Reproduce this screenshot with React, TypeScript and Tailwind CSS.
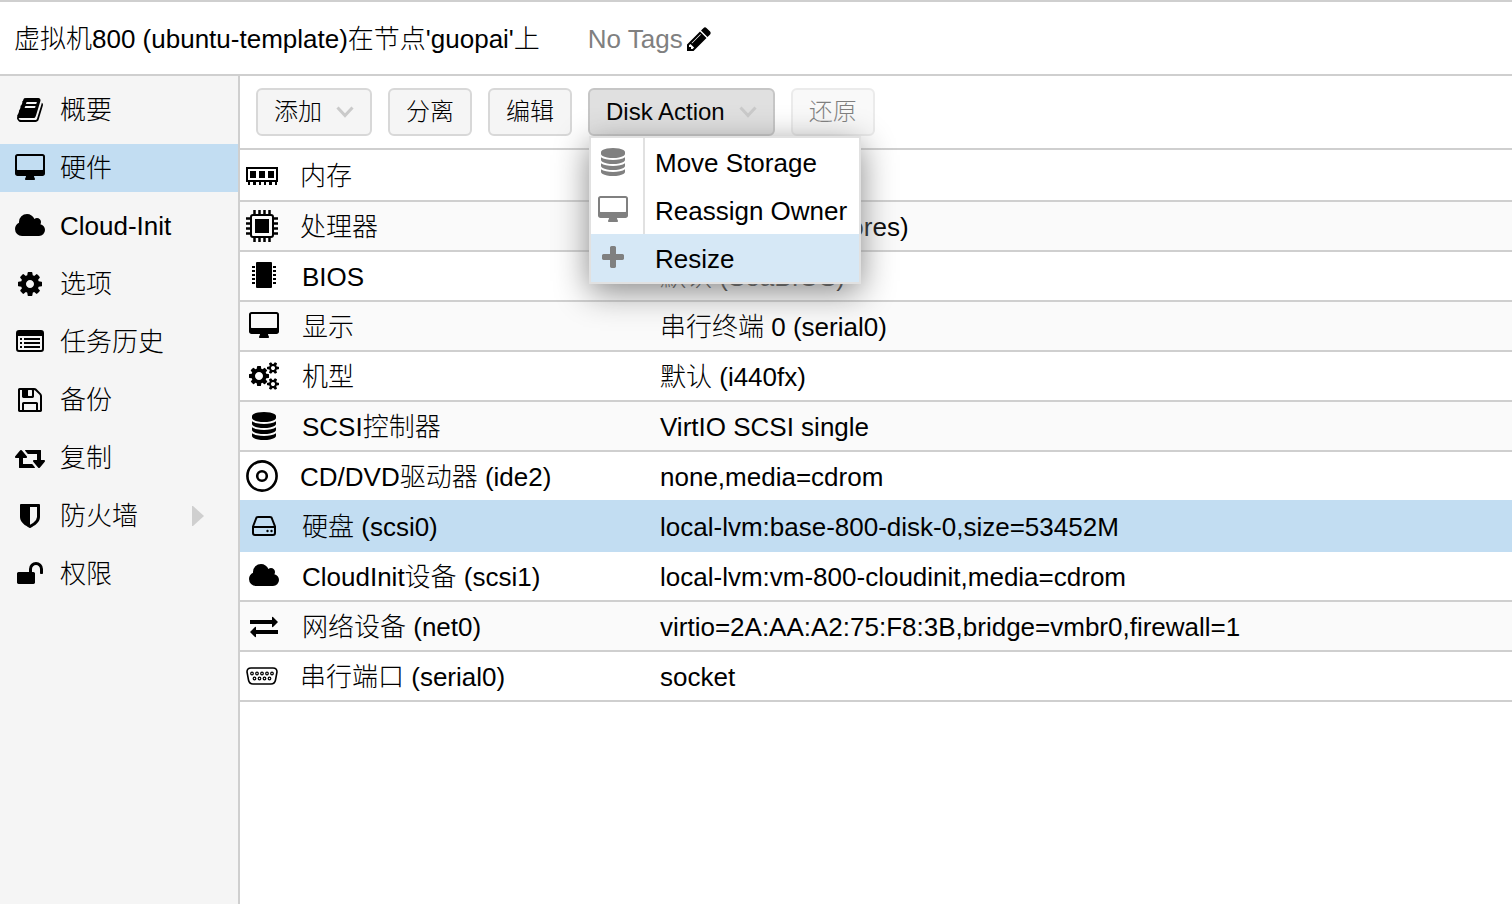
import React from 'react'

type IconProps = { className?: string }

// Solid glyphs, drawn on a grid where 1792 units are 28px
const glyphs = {
    book: 'M1703 478q40 57 18 129l-275 906q-19 64-76.5 107.5t-122.5 43.5h-923q-77 0-148.5-53.5t-99.5-131.5q-24-67-2-127 0-4 3-27t4-37q1-8-3-21.5t-3-19.5q2-11 8-21t16.5-23.5 16.5-23.5q23-38 45-91.5t30-91.5q3-10 .5-30t-.5-28q3-11 17-28t17-23q21-36 42-92t25-90q1-9-2.5-32t.5-28q4-13 22-30.5t22-22.5q19-26 42.5-84.5t27.5-96.5q1-8-3-25.5t-2-26.5q2-8 9-18t18-23 17-21q8-12 16.5-30.5t15-35 16-36 19.5-32 26.5-23.5 36-11.5 47.5 5.5l-1 3q38-9 51-9h761q74 0 114 56t18 130l-274 906q-36 119-71.5 153.5t-128.5 34.5h-869q-27 0-38 15-11 16-1 43 24 70 144 70h923q29 0 56-15.5t35-41.5l300-987q7-22 5-57 38 15 59 43zm-1064 2q-4 13 2 22.5t20 9.5h608q13 0 25.5-9.5t16.5-22.5l21-64q4-13-2-22.5t-20-9.5h-608q-13 0-25.5 9.5t-16.5 22.5zm-83 256q-4 13 2 22.5t20 9.5h608q13 0 25.5-9.5t16.5-22.5l21-64q4-13-2-22.5t-20-9.5h-608q-13 0-25.5 9.5t-16.5 22.5z',
    cog: 'M1152 896q0-106-75-181t-181-75-181 75-75 181 75 181 181 75 181-75 75-181zm512-109v222q0 12-8 23t-20 13l-185 28q-19 54-39 91 35 50 107 138 10 12 10 25t-9 23q-27 37-99 108t-94 71q-12 0-26-9l-138-108q-44 23-91 38-16 136-29 186-7 28-36 28h-222q-14 0-24.5-8.5t-11.5-21.5l-28-184q-49-16-90-37l-141 107q-10 9-25 9-14 0-25-11-126-114-165-168-7-10-7-23 0-12 8-23 15-21 51-66.5t54-70.5q-27-50-41-99l-183-27q-13-2-21-12.5t-8-23.5v-222q0-12 8-23t19-13l186-28q14-46 39-92-40-57-107-138-10-12-10-24 0-10 9-23 26-36 98.5-107.5t94.5-71.5q13 0 26 10l138 107q44-23 91-38 16-136 29-186 7-28 36-28h222q14 0 24.5 8.5t11.5 21.5l28 184q49 16 90 37l142-107q9-9 24-9 13 0 25 10 129 119 165 170 7 8 7 22 0 12-8 23-15 21-51 66.5t-54 70.5q26 50 41 98l183 28q13 2 21 12.5t8 23.5z',
    floppy: 'M512 1536h768v-384h-768v384zm896 0h128v-896q0-14-10-38.5t-20-34.5l-281-281q-10-10-34-20t-39-10v416q0 40-28 68t-68 28h-576q-40 0-68-28t-28-68v-416h-128v1280h128v-416q0-40 28-68t68-28h832q40 0 68 28t28 68v416zm-384-928v-320q0-13-9.5-22.5t-22.5-9.5h-192q-13 0-22.5 9.5t-9.5 22.5v320q0 13 9.5 22.5t22.5 9.5h192q13 0 22.5-9.5t9.5-22.5zm640 32v928q0 40-28 68t-68 28h-1344q-40 0-68-28t-28-68v-1344q0-40 28-68t68-28h928q40 0 88 20t76 48l280 280q28 28 48 76t20 88z',
    shield: 'M1344 960v-640h-448v1137q119-63 213-137 235-184 235-360zm192-768v768q0 86-33.5 170.5t-83 150-118 127.5-126.5 103-121 77.5-89.5 49.5-42.5 20q-12 6-26 6t-26-6q-16-7-42.5-20t-89.5-49.5-121-77.5-126.5-103-118-127.5-83-150-33.5-170.5v-768q0-26 19-45t45-19h1152q26 0 45 19t19 45z',
    unlock: 'M1728 576v256q0 26-19 45t-45 19h-64q-26 0-45-19t-19-45v-256q0-106-75-181t-181-75-181 75-75 181v192h96q40 0 68 28t28 68v576q0 40-28 68t-68 28h-960q-40 0-68-28t-28-68v-576q0-40 28-68t68-28h672v-192q0-185 131.5-316.5t316.5-131.5 316.5 131.5 131.5 316.5z',
    pencil: 'M491 1536l91-91-235-235-91 91v107h128v128h107zm523-928q0-22-22-22-10 0-17 7l-542 542q-7 7-7 17 0 22 22 22 10 0 17-7l542-542q7-7 7-17zm-54-192l416 416-832 832h-416v-416zm683 96q0 53-37 90l-166 166-416-416 166-165q36-38 90-38 53 0 91 38l235 234q37 39 37 91z',
    plus: 'M1600 736v192q0 40-28 68t-68 28h-416v416q0 40-28 68t-68 28h-192q-40 0-68-28t-28-68v-416h-416q-40 0-68-28t-28-68v-192q0-40 28-68t68-28h416v-416q0-40 28-68t68-28h192q40 0 68 28t28 68v416h416q40 0 68 28t28 68z',
    database: 'M896 768q237 0 443-43t325-127v170q0 69-103 128t-280 93.5-385 34.5-385-34.5-280-93.5-103-128v-170q119 84 325 127t443 43zm0 768q237 0 443-43t325-127v170q0 69-103 128t-280 93.5-385 34.5-385-34.5-280-93.5-103-128v-170q119 84 325 127t443 43zm0-384q237 0 443-43t325-127v170q0 69-103 128t-280 93.5-385 34.5-385-34.5-280-93.5-103-128v-170q119 84 325 127t443 43zm0-1152q208 0 385 34.5t280 93.5 103 128v128q0 69-103 128t-280 93.5-385 34.5-385-34.5-280-93.5-103-128v-128q0-69 103-128t280-93.5 385-34.5z',
}

const wideGlyphs = {
    desktop: 'M1792 992v-832q0-13-9.5-22.5t-22.5-9.5h-1600q-13 0-22.5 9.5t-9.5 22.5v832q0 13 9.5 22.5t22.5 9.5h1600q13 0 22.5-9.5t9.5-22.5zm128-832v1088q0 66-47 113t-113 47h-544q0 37 16 77.5t32 71 16 43.5q0 26-19 45t-45 19h-512q-26 0-45-19t-19-45q0-14 16-44t32-70 16-78h-544q-66 0-113-47t-47-113v-1088q0-66 47-113t113-47h1600q66 0 113 47t47 113z',
    cloud: 'M1920 1152q0 159-112.5 271.5t-271.5 112.5h-1088q-185 0-316.5-131.5t-131.5-316.5q0-132 71-241.5t187-163.5q-2-28-2-43 0-212 150-362t362-150q158 0 286.5 88t187.5 230q70-62 166-62 106 0 181 75t75 181q0 75-41 138 129 30 213 134.5t84 239.5z',
    retweet: 'M1280 1504q0 13-9.5 22.5t-22.5 9.5h-960q-8 0-13.5-2t-9-7-5.5-8-3-11.5-1-11.5v-600h-192q-26 0-45-19t-19-45q0-24 15-41l320-384q19-22 49-22t49 22l320 384q15 17 15 41 0 26-19 45t-45 19h-192v384h576q16 0 25 11l160 192q7 10 7 21zm640-416q0 24-15 41l-320 384q-20 23-49 23t-49-23l-320-384q-15-17-15-41 0-26 19-45t45-19h192v-384h-576q-16 0-25-12l-160-192q-7-9-7-20 0-13 9.5-22.5t22.5-9.5h960q8 0 13.5 2t9 7 5.5 8 3 11.5 1 11.5v600h192q26 0 45 19t19 45z',
    cogs: 'M896 896q0-106-75-181t-181-75-181 75-75 181 75 181 181 75 181-75 75-181zm768 512q0-52-38-90t-90-38-90 38-38 90q0 53 37.5 90.5t90.5 37.5 90.5-37.5 37.5-90.5zm0-1024q0-52-38-90t-90-38-90 38-38 90q0 53 37.5 90.5t90.5 37.5 90.5-37.5 37.5-90.5zm-384 421v185q0 10-7 19.5t-16 10.5l-155 24q-11 35-32 76 34 48 90 115 7 11 7 20 0 12-7 19-23 30-82.5 89.5t-78.5 59.5q-11 0-21-7l-115-90q-37 19-77 31-11 108-23 155-7 24-30 24h-186q-11 0-20-7.5t-10-17.5l-23-153q-34-10-75-31l-118 89q-7 7-20 7-11 0-21-8-144-133-144-160 0-9 7-19 10-14 41-53t47-61q-23-44-35-82l-152-24q-10-1-17-9.5t-7-19.5v-185q0-10 7-19.5t16-10.5l155-24q11-35 32-76-34-48-90-115-7-11-7-20 0-12 7-20 22-30 82-89t79-59q11 0 21 7l115 90q34-18 77-32 11-108 23-154 7-24 30-24h186q11 0 20 7.5t10 17.5l23 153q34 10 75 31l118-89q8-7 20-7 11 0 21 8 144 133 144 160 0 8-7 19-12 16-42 54t-45 60q23 48 34 82l152 23q10 2 17 10.5t7 19.5zm640 533v140q0 16-149 31-12 27-30 52 51 113 51 138 0 4-4 7-122 71-124 71-8 0-46-47t-52-68q-20 2-30 2t-30-2q-14 21-52 68t-46 47q-2 0-124-71-4-3-4-7 0-25 51-138-18-25-30-52-149-15-149-31v-140q0-16 149-31 13-29 30-52-51-113-51-138 0-4 4-7 4-2 35-20t59-34 30-16q8 0 46 46.5t52 67.5q20-2 30-2t30 2q51-71 92-112l6-2q4 0 124 70 4 3 4 7 0 25-51 138 17 23 30 52 149 15 149 31zm0-1024v140q0 16-149 31-12 27-30 52 51 113 51 138 0 4-4 7-122 71-124 71-8 0-46-47t-52-68q-20 2-30 2t-30-2q-14 21-52 68t-46 47q-2 0-124-71-4-3-4-7 0-25 51-138-18-25-30-52-149-15-149-31v-140q0-16 149-31 13-29 30-52-51-113-51-138 0-4 4-7 4-2 35-20t59-34 30-16q8 0 46 46.5t52 67.5q20-2 30-2t30 2q51-71 92-112l6-2q4 0 124 70 4 3 4 7 0 25-51 138 17 23 30 52 149 15 149 31z',
}

function Glyph({ name, className = '' }: IconProps & { name: keyof typeof glyphs }) {
    return (
        <svg viewBox="0 0 1792 1792" className={`w-7 h-7 shrink-0 ${className}`} fill="currentColor" aria-hidden="true">
            <path d={glyphs[name]} />
        </svg>
    )
}

function WideGlyph({ name, className = '' }: IconProps & { name: keyof typeof wideGlyphs }) {
    return (
        <svg viewBox="0 0 1920 1792" className={`w-[30px] h-7 shrink-0 ${className}`} fill="currentColor" aria-hidden="true">
            <path d={wideGlyphs[name]} />
        </svg>
    )
}

function ListIcon() {
    return (
        <svg viewBox="0 0 28 28" className="w-7 h-7 shrink-0" aria-hidden="true">
            <rect x="1" y="3" width="26" height="20" rx="2" fill="none" stroke="currentColor" strokeWidth="2" />
            <path d="M1 3h26v5H1zM4 10h2v2H4zM8 10h16v2H8zM4 14h2v2H4zM8 14h16v2H8zM4 18h2v2H4zM8 18h16v2H8z" fill="currentColor" />
        </svg>
    )
}

function MemoryIcon() {
    return (
        <svg viewBox="0 0 32 32" className="w-8 h-8 shrink-0" aria-hidden="true">
            <path d="M1 9h30v13H1z" fill="none" stroke="currentColor" strokeWidth="2" />
            <path d="M4 12h6v7H4zM13 12h6v7h-6zM22 12h6v7h-6zM2 23h2v3H2zM7 23h3v3H7zM13 23h2v3h-2zM18 23h2v3h-2zM23 23h3v3h-3zM29 23h2v3h-2z" fill="currentColor" />
        </svg>
    )
}

function CpuIcon() {
    return (
        <svg viewBox="0 0 32 32" className="w-8 h-8 shrink-0" aria-hidden="true">
            <rect x="5" y="5" width="22" height="22" rx="2" fill="none" stroke="currentColor" strokeWidth="2" />
            <path d="M9 9h14v14H9z" fill="currentColor" />
            <path d="M8.500 0v5M13.500 0v5M18.500 0v5M23.500 0v5M8.500 27v5M13.500 27v5M18.500 27v5M23.500 27v5M0 8.500h5M0 13.500h5M0 18.500h5M0 23.500h5M27 8.500h5M27 13.500h5M27 18.500h5M27 23.500h5" stroke="currentColor" strokeWidth="2.500" />
        </svg>
    )
}

function ChipIcon() {
    return (
        <svg viewBox="0 0 28 28" className="w-7 h-7 shrink-0" fill="currentColor" aria-hidden="true">
            <rect x="6" y="0" width="16" height="26" rx="1" />
            <path d="M2 4h3v2H2zM2 8h3v2H2zM2 12h3v2H2zM2 16h3v2H2zM2 20h3v2H2zM23 4h3v2h-3zM23 8h3v2h-3zM23 12h3v2h-3zM23 16h3v2h-3zM23 20h3v2h-3z" />
        </svg>
    )
}

function DiscIcon() {
    return (
        <svg viewBox="0 0 32 32" className="w-8 h-8 shrink-0" fill="none" stroke="currentColor" aria-hidden="true">
            <circle cx="16" cy="16" r="14.600" strokeWidth="2.600" />
            <circle cx="16" cy="16" r="4.800" strokeWidth="2.600" />
        </svg>
    )
}

function DriveIcon() {
    return (
        <svg viewBox="0 0 28 28" className="w-7 h-7 shrink-0" aria-hidden="true">
            <path d="M3 14.500 6.500 5.500Q7 5 8.200 5h11.600q1.200 0 1.700 .500L25 14.500V21q0 2-2 2H5q-2 0-2-2zM3 15h22" fill="none" stroke="currentColor" strokeWidth="2" />
            <circle cx="17.500" cy="19" r="1.200" fill="currentColor" />
            <circle cx="21.500" cy="19" r="1.200" fill="currentColor" />
        </svg>
    )
}

function ExchangeIcon() {
    return (
        <svg viewBox="0 0 28 28" className="w-7 h-7 shrink-0" fill="currentColor" aria-hidden="true">
            <path d="M0 8h22V5.500q0-1 1-.500l5 5-5 5q-1 .500-1-.500V12H0zM28 18H6v-2.500q0-1-1-.500l-5 5 5 5q1 .500 1-.500V22h22z" />
        </svg>
    )
}

function SerialIcon() {
    return (
        <svg viewBox="0 0 32 32" className="w-8 h-8 shrink-0" fill="none" stroke="currentColor" aria-hidden="true">
            <path d="M5 8h22q4 0 4 4l-1.500 8q-.800 4-4.500 4H7q-3.700 0-4.500-4L1 12q0-4 4-4z" strokeWidth="1.600" />
            <g strokeWidth="1.200">
                <circle cx="6" cy="13.500" r="1.300" />
                <circle cx="11" cy="13.500" r="1.300" />
                <circle cx="16" cy="13.500" r="1.300" />
                <circle cx="21" cy="13.500" r="1.300" />
                <circle cx="26" cy="13.500" r="1.300" />
                <circle cx="8.500" cy="18.500" r="1.300" />
                <circle cx="13.500" cy="18.500" r="1.300" />
                <circle cx="18.500" cy="18.500" r="1.300" />
                <circle cx="23.500" cy="18.500" r="1.300" />
            </g>
        </svg>
    )
}

function Chevron() {
    return (
        <svg viewBox="0 0 18 12" className="w-[18px] h-3 shrink-0" fill="none" stroke="#cacaca" strokeWidth="3" aria-hidden="true">
            <path d="M1.500 1.500 9 9.500l7.500-8" />
        </svg>
    )
}

const navItems = [
    { label: '概要', icon: <Glyph name="book" /> },
    { label: '硬件', icon: <WideGlyph name="desktop" />, active: true },
    { label: 'Cloud-Init', icon: <WideGlyph name="cloud" /> },
    { label: '选项', icon: <Glyph name="cog" /> },
    { label: '任务历史', icon: <ListIcon /> },
    { label: '备份', icon: <Glyph name="floppy" /> },
    { label: '复制', icon: <WideGlyph name="retweet" /> },
    { label: '防火墙', icon: <Glyph name="shield" />, expandable: true },
    { label: '权限', icon: <Glyph name="unlock" /> },
]

const rows = [
    { name: '内存', value: '8.00 GiB', icon: <MemoryIcon />, large: true },
    { name: '处理器', value: '4 (1 sockets, 4 cores)', icon: <CpuIcon />, large: true },
    { name: 'BIOS', value: '默认 (SeaBIOS)', icon: <ChipIcon /> },
    { name: '显示', value: '串行终端 0 (serial0)', icon: <WideGlyph name="desktop" /> },
    { name: '机型', value: '默认 (i440fx)', icon: <WideGlyph name="cogs" /> },
    { name: 'SCSI控制器', value: 'VirtIO SCSI single', icon: <Glyph name="database" /> },
    { name: 'CD/DVD驱动器 (ide2)', value: 'none,media=cdrom', icon: <DiscIcon />, large: true },
    { name: '硬盘 (scsi0)', value: 'local-lvm:base-800-disk-0,size=53452M', icon: <DriveIcon /> },
    { name: 'CloudInit设备 (scsi1)', value: 'local-lvm:vm-800-cloudinit,media=cdrom', icon: <WideGlyph name="cloud" /> },
    { name: '网络设备 (net0)', value: 'virtio=2A:AA:A2:75:F8:3B,bridge=vmbr0,firewall=1', icon: <ExchangeIcon /> },
    { name: '串行端口 (serial0)', value: 'socket', icon: <SerialIcon />, large: true },
]

const selectedRow = 7

const menuItems = [
    { label: 'Move Storage', icon: <Glyph name="database" /> },
    { label: 'Reassign Owner', icon: <WideGlyph name="desktop" /> },
    { label: 'Resize', icon: <Glyph name="plus" />, active: true },
]

const buttonClass = 'h-12 px-4 flex items-center border-2 border-[#d8d8d8] rounded-md bg-[#f5f5f5] text-2xl'

function rowClass(i: number) {
    if (i === selectedRow) return 'bg-[#c2ddf2] border-[#c2ddf2]'
    if (i === selectedRow - 1) return 'bg-white border-[#c2ddf2]'
    return i % 2 ? 'bg-[#fafafa] border-[#cfcfcf]' : 'bg-white border-[#cfcfcf]'
}

export default function App() {
    return (
        <div className="min-h-screen flex flex-col bg-white text-black text-[26px] leading-8 font-light font-['Liberation_Sans','Noto_Sans_CJK_SC',sans-serif]">
            {/* Title bar */}
            <header className="h-[76px] shrink-0 px-3.5 flex items-center border-y-2 border-[#cfcfcf] whitespace-nowrap">
                <h1 className="pt-0.5">虚拟机800 (ubuntu-template)在节点'guopai'上</h1>
                <span className="ml-12 pt-0.5 text-[#808080]">No Tags</span>
                <button type="button" aria-label="Edit Tags" className="ml-0.5 pt-0.5">
                    <Glyph name="pencil" />
                </button>
            </header>

            <div className="flex-1 flex">
                {/* Side navigation */}
                <nav className="w-60 shrink-0 pt-2.5 flex flex-col gap-2.5 bg-[#f5f5f5] border-r-2 border-[#cfcfcf]">
                    {navItems.map((item) => (
                        <a
                            key={item.label}
                            href="#"
                            className={`h-12 pl-3 flex items-center ${item.active ? 'bg-[#c2ddf2]' : ''}`}
                        >
                            <span className="w-9 flex justify-center">{item.icon}</span>
                            <span className="ml-3 flex-1">{item.label}</span>
                            {item.expandable && (
                                <svg viewBox="0 0 12 20" className="w-3 h-5 mr-[34px]" fill="#cfcfcf" aria-hidden="true">
                                    <path d="M0 0h1l11 10L1 20H0z" />
                                </svg>
                            )}
                        </a>
                    ))}
                </nav>

                <main className="flex-1 min-w-0">
                    {/* Toolbar */}
                    <div className="h-[74px] px-4 flex items-center gap-4 border-b-2 border-[#cfcfcf] whitespace-nowrap">
                        <button type="button" className={`${buttonClass} gap-3.5`}>
                            添加
                            <Chevron />
                        </button>
                        <button type="button" className={buttonClass}>分离</button>
                        <button type="button" className={buttonClass}>编辑</button>
                        <div className="relative">
                            <button
                                type="button"
                                aria-haspopup="menu"
                                aria-expanded="true"
                                className="h-12 px-4 flex items-center gap-3.5 border-2 border-[#c6c6c6] rounded-md bg-[#e0e0e0] text-2xl"
                            >
                                Disk Action
                                <Chevron />
                            </button>
                            <div
                                role="menu"
                                className="absolute left-px top-full z-10 border-2 border-[#e1e1e1] bg-white shadow-[0_8px_32px_#888888]"
                            >
                                {menuItems.map((item) => (
                                    <button
                                        key={item.label}
                                        type="button"
                                        role="menuitem"
                                        className={`w-full h-12 flex items-center text-left ${item.active ? 'bg-[#d6e8f6]' : ''}`}
                                    >
                                        <span
                                            className={`w-[54px] h-full shrink-0 pr-2 flex items-center justify-center border-r-2 text-[#808080] ${item.active ? 'border-transparent' : 'border-[#e1e1e1]'}`}
                                        >
                                            {item.icon}
                                        </span>
                                        <span className="pl-2.5 pr-3 pt-0.5">{item.label}</span>
                                    </button>
                                ))}
                            </div>
                        </div>
                        <button type="button" disabled className={`${buttonClass} opacity-50`}>还原</button>
                    </div>

                    {/* Hardware list */}
                    <table className="w-full table-fixed border-separate border-spacing-0 whitespace-nowrap">
                        <colgroup>
                            <col className="w-[420px]" />
                            <col />
                        </colgroup>
                        <tbody>
                            {rows.map((row, i) => (
                                <tr key={row.name} className={rowClass(i)}>
                                    <td className={`p-0 border-b-2 border-inherit ${i === 0 ? 'h-[52px]' : 'h-[50px]'}`}>
                                        <div className="pl-1.5 flex items-center">
                                            <span className={`shrink-0 flex justify-center ${row.large ? 'w-8' : 'w-9'}`}>{row.icon}</span>
                                            <span className={`pt-0.5 ${row.large ? 'ml-[22px]' : 'ml-5'}`}>{row.name}</span>
                                        </div>
                                    </td>
                                    <td className="px-0 pt-0.5 pb-0 border-b-2 border-inherit">{row.value}</td>
                                </tr>
                            ))}
                        </tbody>
                    </table>
                </main>
            </div>
        </div>
    )
}
